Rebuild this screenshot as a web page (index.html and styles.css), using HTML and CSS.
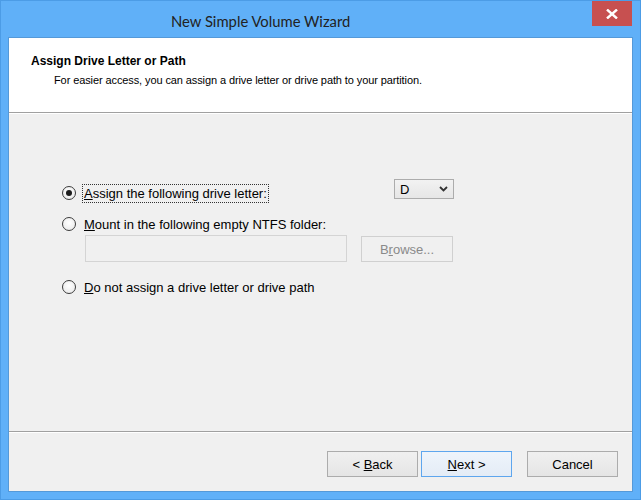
FILE: index.html
```html
<!DOCTYPE html>
<html>
<head>
<meta charset="utf-8">
<link rel="stylesheet" href="styles.css">
</head>
<body>
<div class="window">
  <div class="titlebar">
    <span class="title">New Simple Volume Wizard</span>
    <div class="close">
      <svg width="12" height="10" viewBox="0 0 12 10"><path d="M1 0.5 L11 9.5 M11 0.5 L1 9.5" stroke="#fff" stroke-width="2.4" fill="none"/></svg>
    </div>
  </div>
  <div class="client">
    <div class="header">
      <div class="h-title">Assign Drive Letter or Path</div>
      <div class="h-sub">For easier access, you can assign a drive letter or drive path to your partition.</div>
    </div>
    <div class="sep"></div>
    <div class="body">
      <div class="row row1">
        <span class="radio checked"></span>
        <span class="label focus"><u>A</u>ssign the following drive letter:</span>
        <div class="combo"><span>D</span>
          <svg width="9" height="6" viewBox="0 0 9 6"><path d="M1 1 L4.5 4.5 L8 1" stroke="#333" stroke-width="1.8" fill="none"/></svg>
        </div>
      </div>
      <div class="row row2">
        <span class="radio"></span>
        <span class="label"><u>M</u>ount in the following empty NTFS folder:</span>
      </div>
      <div class="row row2b">
        <div class="textbox"></div>
        <div class="btn disabled"><span>B<u>r</u>owse...</span></div>
      </div>
      <div class="row row3">
        <span class="radio"></span>
        <span class="label"><u>D</u>o not assign a drive letter or drive path</span>
      </div>
    </div>
    <div class="sep"></div>
    <div class="footer">
      <div class="btn"><span>&lt; <u>B</u>ack</span></div>
      <div class="btn default"><span><u>N</u>ext &gt;</span></div>
      <div class="btn cancel"><span>Cancel</span></div>
    </div>
  </div>
</div>
</body>
</html>
```
FILE: styles.css
```css
* { box-sizing: border-box; }
html, body { margin: 0; padding: 0; }
body { width: 641px; height: 500px; overflow: hidden; font-family: "Liberation Sans", Arial, sans-serif; }

.window {
  width: 641px; height: 500px;
  background: #60b0f8;
  border: 1px solid #4c9ce6;
  padding: 0 7px 7px 7px;
  display: flex; flex-direction: column;
  position: relative;
}
.titlebar {
  height: 36px;
  display: flex; align-items: center;
  padding-left: 163px;
}
.title { font-family: "Lato", sans-serif; font-size: 14.8px; color: #222; margin-top: 4px; }
.close {
  position: absolute; top: 0; right: 8px;
  width: 40px; height: 25px;
  background: #c75050;
  display: flex; align-items: center; justify-content: center;
}
.client {
  flex: 1;
  border: 1px solid #5599d8;
  background: #f0f0f0;
  display: flex; flex-direction: column;
}
.header {
  height: 74px; background: #fff;
  padding: 16px 0 0 22px;
}
.h-title { font-weight: bold; font-size: 12px; line-height: 14px; color: #000; }
.h-sub { font-size: 11px; line-height: 14px; margin: 5px 0 0 23px; color: #000; letter-spacing: -0.1px; }
.sep { height: 2px; border-top: 1px solid #a0a0a0; border-bottom: 1px solid #fff; }
.body { height: 317px; padding-top: 69px; font-size: 13px; color: #000; }
.row { display: flex; align-items: center; }
.row1 { height: 20px; padding-left: 53px; }
.row2 { height: 20px; margin-top: 11px; padding-left: 53px; }
.row2b { margin-top: 1px; padding-left: 76px; align-items: flex-start; }
.row3 { height: 20px; margin-top: 15px; padding-left: 53px; }

.radio {
  width: 14px; height: 14px; border-radius: 50%;
  border: 1px solid #3c3c3c;
  background: radial-gradient(circle at 50% 40%, #fff, #e6e6e6);
  position: relative; flex: none;
}
.radio.checked::after {
  content: ""; position: absolute; left: 3px; top: 3px;
  width: 6px; height: 6px; border-radius: 50%; background: #1c1c1c;
}
.label { margin-left: 6px; padding: 1px 1px; border: 1px solid transparent; }
.label.focus { border: 1px dotted #333; }
.combo {
  margin-left: auto; margin-right: 178px;
  align-self: flex-start; margin-top: -4px;
  width: 60px; height: 20px;
  border: 1px solid #acacac;
  background: linear-gradient(#f2f2f2, #e6e6e6);
  display: flex; align-items: center; justify-content: space-between;
  padding: 0 5px 0 5px; font-size: 13px;
}
.textbox { width: 262px; height: 27px; border: 1px solid #d4d4d4; background: #f0f0f0; }
.btn {
  width: 91px; height: 26px;
  border: 1px solid #acacac;
  background: linear-gradient(#f0f0f0, #e5e5e5);
  display: flex; align-items: center; justify-content: center;
  font-size: 13px; color: #000;
}
.btn.disabled { margin-left: 14px; margin-top: 1px; width: 92px; height: 26px; color: #8a8a8a; border-color: #d0d0d0; background: #f0f0f0; }
.footer { flex: 1; display: flex; padding: 18px 14px 0 0; justify-content: flex-end; align-items: flex-start; }
.btn.default { margin-left: 3px; border-color: #5ea6ee; background: linear-gradient(#eef4fb, #e4ecf6); }
.btn.cancel { margin-left: 15px; }
```
